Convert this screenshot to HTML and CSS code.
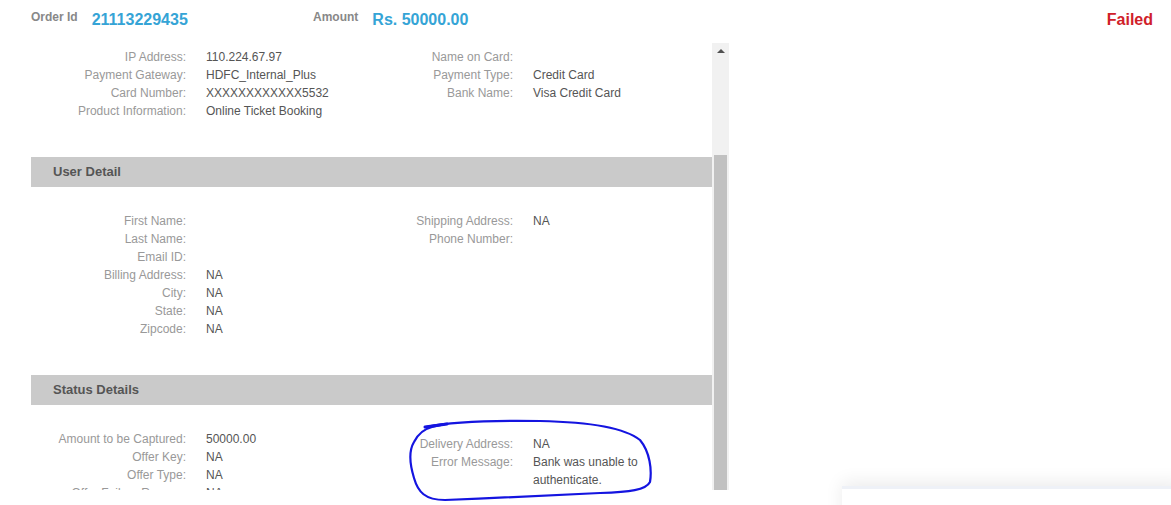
FILE: index.html
```html
<!DOCTYPE html>
<html lang="en">
<head>
  <meta charset="UTF-8" />
  <meta name="viewport" content="width=device-width, initial-scale=1.0"/>
  <title>Transaction Detail</title>
  <link rel="stylesheet" href="styles.css">
</head>
<body>
  <header class="txn-head">
    <div class="meta">
      <span class="meta-label">Order Id</span>
      <span class="meta-value">21113229435</span>
    </div>
    <div class="meta">
      <span class="meta-label">Amount</span>
      <span class="meta-value">Rs. 50000.00</span>
    </div>
    <div class="status-failed">Failed</div>
  </header>

  <div class="panel">
    <div class="panel-view">
      <div class="section-body first">
        <div class="col">
          <div class="row"><span class="lbl">IP Address:</span><span class="val">110.224.67.97</span></div>
          <div class="row"><span class="lbl">Payment Gateway:</span><span class="val">HDFC_Internal_Plus</span></div>
          <div class="row"><span class="lbl">Card Number:</span><span class="val">XXXXXXXXXXXX5532</span></div>
          <div class="row"><span class="lbl">Product Information:</span><span class="val">Online Ticket Booking</span></div>
        </div>
        <div class="col">
          <div class="row"><span class="lbl">Name on Card:</span><span class="val"></span></div>
          <div class="row"><span class="lbl">Payment Type:</span><span class="val">Credit Card</span></div>
          <div class="row"><span class="lbl">Bank Name:</span><span class="val">Visa Credit Card</span></div>
        </div>
      </div>

      <div class="section-title">User Detail</div>
      <div class="section-body">
        <div class="col">
          <div class="row"><span class="lbl">First Name:</span><span class="val"></span></div>
          <div class="row"><span class="lbl">Last Name:</span><span class="val"></span></div>
          <div class="row"><span class="lbl">Email ID:</span><span class="val"></span></div>
          <div class="row"><span class="lbl">Billing Address:</span><span class="val">NA</span></div>
          <div class="row"><span class="lbl">City:</span><span class="val">NA</span></div>
          <div class="row"><span class="lbl">State:</span><span class="val">NA</span></div>
          <div class="row"><span class="lbl">Zipcode:</span><span class="val">NA</span></div>
        </div>
        <div class="col">
          <div class="row"><span class="lbl">Shipping Address:</span><span class="val">NA</span></div>
          <div class="row"><span class="lbl">Phone Number:</span><span class="val"></span></div>
        </div>
      </div>

      <div class="section-title">Status Details</div>
      <div class="section-body">
        <div class="col">
          <div class="row"><span class="lbl">Amount to be Captured:</span><span class="val">50000.00</span></div>
          <div class="row"><span class="lbl">Offer Key:</span><span class="val">NA</span></div>
          <div class="row"><span class="lbl">Offer Type:</span><span class="val">NA</span></div>
          <div class="row"><span class="lbl">Offer Failure Reason:</span><span class="val">NA</span></div>
          <div class="row"><span class="lbl">Offer Availed:</span><span class="val">NA</span></div>
        </div>
        <div class="col col-shift">
          <div class="row"><span class="lbl">Delivery Address:</span><span class="val">NA</span></div>
          <div class="row"><span class="lbl">Error Message:</span><span class="val">Bank was unable to authenticate.</span></div>
        </div>
      </div>
    </div>

    <div class="scrollbar">
      <div class="scroll-up"></div>
      <div class="scroll-thumb"></div>
    </div>
  </div>

  <!-- hand-drawn marker annotation over the screenshot -->
  <svg class="ink-circle" width="255" height="92" viewBox="0 0 255 92">
    <path d="M21 12 C45 7,75 5,135 6 C185 7,220 13,235 25 C245 37,247 55,245 67 C241 75,225 77,195 78 C155 80,95 83,40 85 C20 85,13 77,9 63 C5 50,3 37,9 27 C13 19,19 14,27 12 L41 9" fill="none" stroke="#1414e0" stroke-width="2.2" stroke-linecap="round"/>
    <path d="M20 12 L42 9" stroke="#1414e0" stroke-width="3" stroke-linecap="round"/>
  </svg>

  <div class="float-card"></div>
</body>
</html>
```

FILE: styles.css
```css
* {
  box-sizing: border-box;
}

body {
  margin: 0;
  height: 505px;
  overflow: hidden;
  font-family: "Liberation Sans", Arial, sans-serif;
  font-size: 12px;
  background: #fff;
  color: #555;
  position: relative;
}

/* top line with order id / amount / status */
.txn-head {
  display: flex;
  align-items: flex-start;
  height: 43px;
  padding: 9px 18px 0 31px;
}

.meta {
  display: flex;
  align-items: flex-start;
  width: 282px;
}

.meta-label {
  font-weight: 700;
  font-size: 12px;
  line-height: 16px;
  color: #888;
  margin-right: 14px;
}

.meta-value {
  font-weight: 700;
  font-size: 16px;
  line-height: 22px;
  color: #35a4d6;
}

.status-failed {
  margin-left: auto;
  font-weight: 700;
  font-size: 16px;
  line-height: 22px;
  color: #d0202a;
}

/* scrolling detail panel */
.panel {
  display: flex;
  margin-left: 31px;
  width: 698px;
  height: 447px;
}

.panel-view {
  flex: 1;
  overflow: hidden;
}

.section-title {
  height: 30px;
  line-height: 30px;
  padding-left: 22px;
  background: #cacaca;
  color: #555;
  font-weight: 700;
  font-size: 13px;
}

.section-body {
  display: flex;
  padding: 25px 0 37px;
}

.section-body.first {
  padding-top: 5px;
}

.col {
  width: 327px;
}

.col-shift {
  padding-top: 5px;
}

.row {
  display: grid;
  grid-template-columns: 155px 1fr;
  column-gap: 20px;
  line-height: 18px;
}

.lbl {
  text-align: right;
  color: #999;
}

.val {
  color: #555;
}

.ink-circle {
  position: absolute;
  left: 405px;
  top: 415px;
  pointer-events: none;
}

.scrollbar {
  width: 17px;
  background: #f1f1f1;
  display: flex;
  flex-direction: column;
  align-items: center;
}

.scroll-up {
  width: 0;
  height: 0;
  margin-top: 6px;
  border-left: 4px solid transparent;
  border-right: 4px solid transparent;
  border-bottom: 4px solid #505050;
}

.scroll-thumb {
  width: 13px;
  margin-top: 102px;
  flex: 1;
  background: #c1c1c1;
}

/* floating widget peeking in at the bottom */
.float-card {
  position: absolute;
  left: 842px;
  top: 486px;
  width: 340px;
  height: 40px;
  background: #fff;
  border-top: 3px solid #eef1f7;
  box-shadow: 0 -4px 18px rgba(0, 0, 0, 0.08);
}
```
